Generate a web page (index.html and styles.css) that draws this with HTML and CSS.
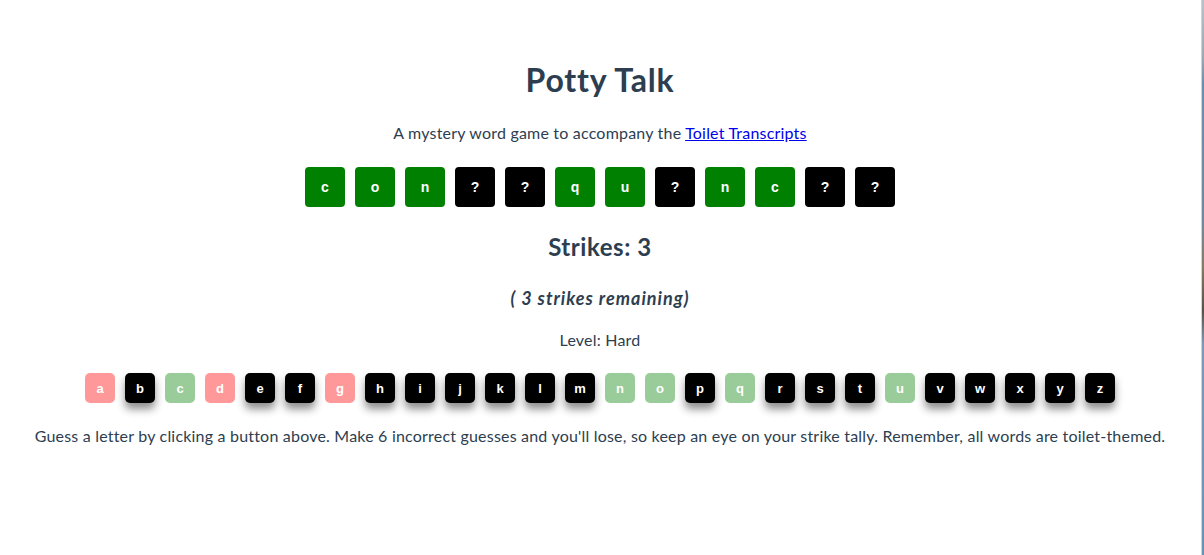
FILE: index.html
```html
<!DOCTYPE html>
<html lang="en">
<head>
<meta charset="utf-8">
<title>Potty Talk</title>
<link rel="stylesheet" href="styles.css">
</head>
<body>
<div class="app">
  <h1 class="title">Potty Talk</h1>
  <p class="subtitle">A mystery word game to accompany the <a href="#">Toilet Transcripts</a></p>
  <div class="word">
    <span class="tile found">c</span>
    <span class="tile found">o</span>
    <span class="tile found">n</span>
    <span class="tile">?</span>
    <span class="tile">?</span>
    <span class="tile found">q</span>
    <span class="tile found">u</span>
    <span class="tile">?</span>
    <span class="tile found">n</span>
    <span class="tile found">c</span>
    <span class="tile">?</span>
    <span class="tile">?</span>
  </div>
  <h2 class="strikes">Strikes: 3</h2>
  <p class="remaining">( 3 strikes remaining)</p>
  <p class="level">Level: Hard</p>
  <div class="keys">
    <button class="key wrong">a</button>
    <button class="key">b</button>
    <button class="key right">c</button>
    <button class="key wrong">d</button>
    <button class="key">e</button>
    <button class="key">f</button>
    <button class="key wrong">g</button>
    <button class="key">h</button>
    <button class="key">i</button>
    <button class="key">j</button>
    <button class="key">k</button>
    <button class="key">l</button>
    <button class="key">m</button>
    <button class="key right">n</button>
    <button class="key right">o</button>
    <button class="key">p</button>
    <button class="key right">q</button>
    <button class="key">r</button>
    <button class="key">s</button>
    <button class="key">t</button>
    <button class="key right">u</button>
    <button class="key">v</button>
    <button class="key">w</button>
    <button class="key">x</button>
    <button class="key">y</button>
    <button class="key">z</button>
  </div>
  <p class="help">Guess a letter by clicking a button above. Make 6 incorrect guesses and you'll lose, so keep an eye on your strike tally. Remember, all words are toilet-themed.</p>
</div>
<div class="edge"></div>
</body>
</html>
```

FILE: styles.css
```css
html, body {
  margin: 0;
  padding: 0;
  background: #fff;
}

.app {
  width: 1200px;
  text-align: center;
  color: #2c3e50;
  font-family: Lato, "Open Sans", Helvetica, Arial, sans-serif;
  display: flex;
  flex-direction: column;
  align-items: center;
}

.title {
  margin: 61px 0 0;
  font-size: 32px;
  line-height: 38px;
  font-weight: 700;
  letter-spacing: 0.8px;
}

.subtitle {
  margin: 24px 0 0;
  font-size: 16px;
  line-height: 20px;
  letter-spacing: 0.2px;
}

.subtitle a {
  color: #0000ee;
  text-decoration: underline;
}

.word {
  margin-top: 24px;
  display: flex;
  gap: 10px;
}

.tile {
  width: 40px;
  height: 40px;
  border-radius: 4px;
  background: #000;
  color: #fff;
  font-family: "Liberation Sans", Arial, sans-serif;
  font-weight: 700;
  font-size: 14px;
  display: flex;
  align-items: center;
  justify-content: center;
}

.tile.found {
  background: #008000;
}

.strikes {
  margin: 26px 0 0;
  font-size: 24px;
  line-height: 28px;
  font-weight: 700;
  letter-spacing: 0.55px;
}

.remaining {
  margin: 26px 0 0;
  font-size: 18px;
  line-height: 22px;
  font-weight: 700;
  font-style: italic;
  letter-spacing: 1px;
}

.level {
  margin: 21px 0 0;
  font-size: 16px;
  line-height: 20px;
  letter-spacing: 0.2px;
}

.keys {
  margin-top: 23px;
  display: flex;
  gap: 10px;
}

.key {
  width: 30px;
  height: 30px;
  padding: 0;
  border: none;
  border-radius: 5px;
  background: #000;
  color: #fff;
  font-family: "Liberation Sans", Arial, sans-serif;
  font-weight: 700;
  font-size: 13px;
  box-shadow: 0 6px 8px rgba(0, 0, 0, 0.45);
  display: flex;
  align-items: center;
  justify-content: center;
}

.key.wrong {
  background: #ff9999;
  box-shadow: none;
}

.key.right {
  background: #99cc99;
  box-shadow: none;
}

.help {
  margin: 23px 0 0;
  font-size: 16px;
  line-height: 20px;
  letter-spacing: 0.2px;
}

.edge {
  position: fixed;
  top: 0;
  right: 0;
  width: 2px;
  height: 555px;
  border-left: 1px solid #cfd3d6;
  background: linear-gradient(#b8c2cc 0%, #9aaab8 10%, #6d8fae 15%, #6f89a0 40%, #8a7a62 48%, #5a5048 56%, #7d9ab8 62%, #6a92b6 100%);
}
```
